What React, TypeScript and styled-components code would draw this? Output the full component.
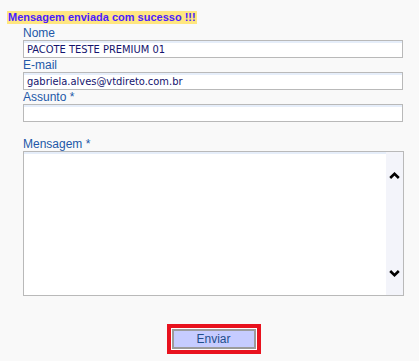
import React from 'react';
import styled, { createGlobalStyle } from 'styled-components';

const GlobalStyle = createGlobalStyle`
	html, body {
		margin: 0;
		padding: 0;
		background: #f9f9f9;
	}
	body {
		font-family: 'Liberation Sans', Arial, sans-serif;
	}
`;

const Page = styled.div`
	width: 419px;
	height: 361px;
	background: #f9f9f9;
	padding-top: 7px;
	box-sizing: border-box;
`;

const SuccessBar = styled.div`
	padding-left: 7px;
	height: 13px;
`;

const SuccessText = styled.span`
	display: inline-block;
	background: #ffe680;
	color: #4a1cff;
	font-family: 'Liberation Sans', Arial, sans-serif;
	font-weight: 700;
	font-size: 11px;
	line-height: 13px;
	padding: 0 1px;
`;

const Form = styled.form`
	margin: 6px 0 0 23px;
	width: 381px;
	display: flex;
	flex-direction: column;
`;

const Label = styled.label<{ $gap?: number }>`
	display: block;
	height: 14px;
	margin-top: ${({ $gap }) => $gap ?? 0}px;
	font-size: 12px;
	line-height: 14px;
	color: #2258a8;
`;

const TextInput = styled.input`
	width: 380px;
	height: 18px;
	box-sizing: border-box;
	margin: 0;
	padding: 0 3px;
	border: 1px solid #b9b9b9;
	box-shadow: inset 0 2px 0 #e6eefa;
	background: #fff;
	font-family: 'DejaVu Sans Condensed', 'DejaVu Sans', sans-serif;
	font-size: 11px;
	color: #14146e;
	outline: none;
`;

const TextareaBox = styled.div`
	width: 381px;
	height: 145px;
	box-sizing: border-box;
	border: 1px solid #b9b9b9;
	background: #fff;
	display: flex;
	box-shadow: inset 0 2px 0 #e6eefa;
`;

const MessageArea = styled.textarea`
	flex: 1;
	border: none;
	resize: none;
	background: transparent;
	outline: none;
	font-family: 'DejaVu Sans Condensed', 'DejaVu Sans', sans-serif;
	font-size: 11px;
	overflow: hidden;
`;

const ScrollTrack = styled.div`
	width: 17px;
	background: #f3f4fa;
	display: flex;
	flex-direction: column;
	justify-content: space-between;
	align-items: center;
	padding: 20px 0 18px;
`;

const ButtonRow = styled.div`
	margin-top: 28px;
	display: flex;
	justify-content: center;
`;

const Highlight = styled.div`
	border: 4px solid #e8121e;
	padding: 1px;
	background: #fff;
	display: flex;
`;

const SendButton = styled.button`
	width: 84px;
	height: 20px;
	box-sizing: border-box;
	border: 2px solid #9b9b9b;
	background: #c6ccff;
	color: #1f4e8c;
	font-family: 'Liberation Sans', Arial, sans-serif;
	font-size: 12px;
	padding: 0;
	cursor: pointer;
`;

const Chevron = ({ up }: { up?: boolean }) => (
	<svg width="11" height="7" viewBox="0 0 11 7">
		<path
			d={up ? 'M1.2 6 L5.5 1.8 L9.8 6' : 'M1.2 1 L5.5 5.2 L9.8 1'}
			fill="none"
			stroke="#000"
			strokeWidth="2.6"
		/>
	</svg>
);

export default function App() {
	return (
		<Page>
			<GlobalStyle />
			<SuccessBar>
				<SuccessText>Mensagem enviada com sucesso !!!</SuccessText>
			</SuccessBar>
			<Form onSubmit={(e) => e.preventDefault()}>
				<Label>Nome</Label>
				<TextInput defaultValue="PACOTE TESTE PREMIUM 01" />
				<Label>E-mail</Label>
				<TextInput defaultValue="gabriela.alves@vtdireto.com.br" />
				<Label>Assunto *</Label>
				<TextInput />
				<Label $gap={15}>Mensagem *</Label>
				<TextareaBox>
					<MessageArea />
					<ScrollTrack>
						<Chevron up />
						<Chevron />
					</ScrollTrack>
				</TextareaBox>
				<ButtonRow>
					<Highlight>
						<SendButton type="submit">Enviar</SendButton>
					</Highlight>
				</ButtonRow>
			</Form>
		</Page>
	);
}
